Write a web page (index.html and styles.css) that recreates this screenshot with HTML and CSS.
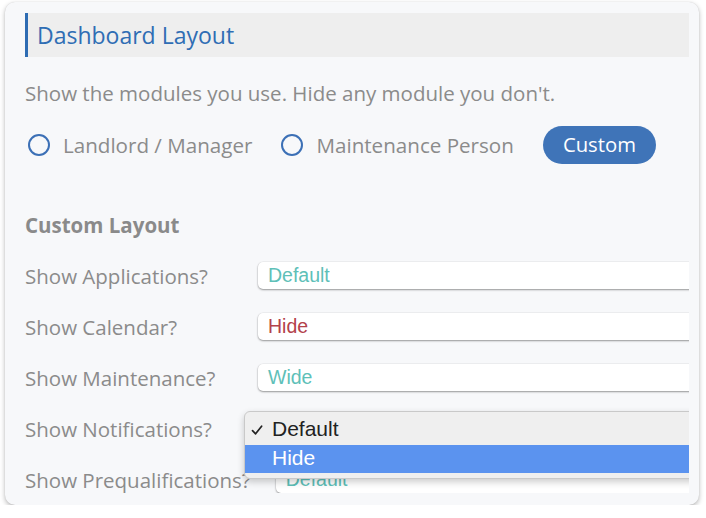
FILE: index.html
```html
<!DOCTYPE html>
<html>
<head>
<meta charset="utf-8">
<link rel="stylesheet" href="styles.css">
</head>
<body>
<div class="card">
  <div class="content">
    <div class="section-head"><h1 class="section-title">Dashboard Layout</h1></div>
    <p class="desc">Show the modules you use. Hide any module you don't.</p>
    <div class="choices">
      <label class="radio"><span class="radio-dot"></span><span class="radio-text">Landlord / Manager</span></label>
      <label class="radio"><span class="radio-dot"></span><span class="radio-text">Maintenance Person</span></label>
      <span class="pill">Custom</span>
    </div>
    <h2 class="sub-title">Custom Layout</h2>
    <div class="rows">
      <div class="row"><span class="row-label">Show Applications?</span><div class="select val-default">Default</div></div>
      <div class="row"><span class="row-label">Show Calendar?</span><div class="select val-hide">Hide</div></div>
      <div class="row"><span class="row-label">Show Maintenance?</span><div class="select val-default">Wide</div></div>
      <div class="row"><span class="row-label">Show Notifications?</span><div class="select is-open"></div></div>
      <div class="row"><span class="row-label">Show Prequalifications?</span><div class="select val-default">Default</div></div>
    </div>
    <div class="menu">
      <div class="menu-item checked"><svg class="check" viewBox="0 0 12 12" width="12" height="12"><path d="M1.5 6.6 L4.6 9.8 L10.6 2.2" fill="none" stroke="#222" stroke-width="1.7" stroke-linecap="round" stroke-linejoin="round"/></svg><span>Default</span></div>
      <div class="menu-item active"><span>Hide</span></div>
    </div>
  </div>
</div>
</body>
</html>
```
FILE: styles.css
```css
html, body {
  margin: 0;
  padding: 0;
  background: #ffffff;
}
body {
  font-family: "Open Sans", "Noto Sans", sans-serif;
}
.card {
  box-sizing: border-box;
  margin: 2px 7px 0 5px;
  width: 694px;
  height: 503px;
  padding: 11px 10px 12px 20px;
  background: #f7f8fa;
  border-radius: 10px;
  box-shadow: 0 2px 5px rgba(0, 0, 0, 0.28), 0 0 1px rgba(0, 0, 0, 0.15);
}
.content {
  position: relative;
  overflow: hidden;
  height: 100%;
  display: flex;
  flex-direction: column;
}
.section-head {
  height: 44px;
  flex: none;
  background: #eeeeee;
  border-left: 3px solid #2e6cb3;
  display: flex;
  align-items: center;
  padding-left: 9px;
}
.section-title {
  margin: 0;
  font-size: 23px;
  font-weight: 400;
  color: #2f6db4;
  line-height: 28px;
}
.desc {
  margin: 23px 0 0;
  font-size: 20.5px;
  line-height: 26px;
  color: #8b8b8b;
}
.choices {
  margin-top: 20px;
  height: 38px;
  display: flex;
  align-items: center;
}
.radio {
  display: flex;
  align-items: center;
  margin-right: 26px;
}
.radio-dot {
  box-sizing: border-box;
  width: 22px;
  height: 22px;
  margin-left: 3px;
  border: 2.5px solid #3c70b6;
  border-radius: 50%;
}
.radio-text {
  margin-left: 13px;
  font-size: 20.6px;
  color: #8b8b8b;
  line-height: 26px;
}
.pill {
  height: 38px;
  margin-left: 3px;
  padding: 0 20px;
  border-radius: 19px;
  background: #3f74b8;
  color: #ffffff;
  font-size: 20.3px;
  line-height: 37px;
}
.sub-title {
  margin: 48px 0 0;
  font-size: 20.5px;
  font-weight: 700;
  line-height: 26px;
  color: #8a8a8a;
}
.rows {
  margin-top: 24px;
  display: flex;
  flex-direction: column;
  gap: 24px;
}
.row {
  height: 27px;
  display: flex;
  align-items: center;
}
.row-label {
  box-sizing: border-box;
  flex: none;
  min-width: 233px;
  padding-right: 25px;
  font-size: 20.5px;
  color: #8b8b8b;
  white-space: nowrap;
}
.select {
  box-sizing: border-box;
  flex: none;
  width: 470px;
  height: 27px;
  padding-left: 10px;
  background: #ffffff;
  border-radius: 5px;
  box-shadow: 0 1px 2px rgba(0, 0, 0, 0.38), 0 0 0 0.5px rgba(0, 0, 0, 0.06);
  font-family: "Liberation Sans", Arial, sans-serif;
  font-size: 19.5px;
  line-height: 27px;
}
.val-default {
  color: #5ec0b8;
}
.val-hide {
  color: #b3424b;
}
.menu {
  position: absolute;
  left: 219px;
  top: 398px;
  width: 480px;
  box-sizing: border-box;
  padding: 5px 0 5px;
  background: #efefef;
  border: 1px solid #c9c9c9;
  border-radius: 6px;
  box-shadow: 0 3px 7px rgba(0, 0, 0, 0.2);
  font-family: "Liberation Sans", Arial, sans-serif;
  font-size: 21px;
  color: #222222;
}
.menu-item {
  height: 28px;
  display: flex;
  align-items: center;
  padding-left: 27px;
  position: relative;
}
.menu-item span {
  position: relative;
  top: -1px;
}
.menu-item.checked span {
  top: -2px;
}
.check {
  position: absolute;
  left: 6px;
  top: 7px;
}
.menu-item.active {
  background: #5b93ef;
  color: #ffffff;
}
```
